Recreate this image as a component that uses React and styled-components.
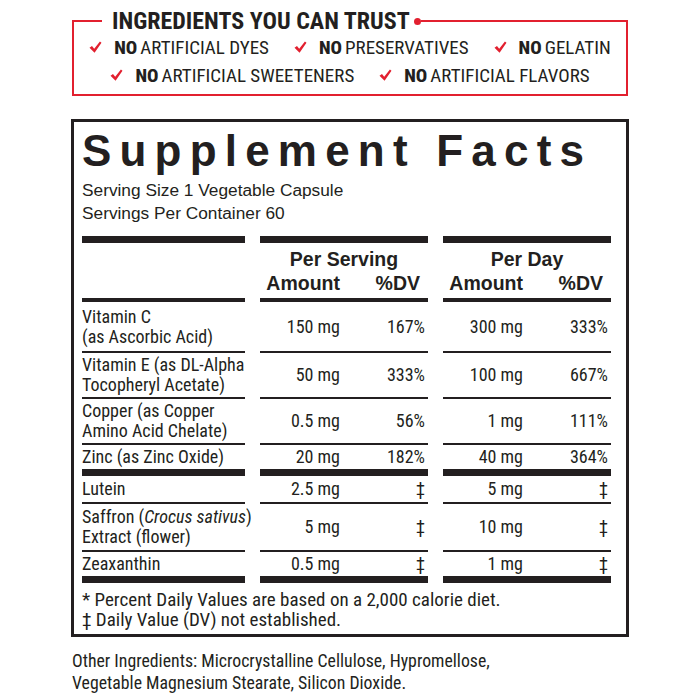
import React from 'react'
import styled, { createGlobalStyle } from 'styled-components'

const ink = '#231f20'
const red = '#e2202f'
const narrow = 'Roboto, "Liberation Sans", sans-serif'
const sans = '"Liberation Sans", Arial, sans-serif'

const GlobalStyle = createGlobalStyle`
  body {
    margin: 0;
    background: #fff;
    color: ${ink};
    font-family: ${sans};
  }
`

const Page = styled.main`
  width: 558px;
  margin: 0 auto;
  padding-top: 9px;
`

const TrustBox = styled.fieldset`
  box-sizing: border-box;
  width: 556px;
  margin: 0 auto;
  padding: 0 0 5px;
  border: 2px solid ${red};
`

const TrustTitle = styled.legend`
  margin-left: 28px;
  padding: 0 0 0 10px;
  font-family: ${narrow};
  font-stretch: 75%;
  font-weight: 700;
  font-size: 24px;
  line-height: 24px;
  display: flex;
  align-items: center;
`

const Dot = styled.span`
  width: 7px;
  height: 7px;
  border-radius: 50%;
  background: ${red};
  margin-left: 4px;
`

const ClaimRow = styled.div`
  display: flex;
  justify-content: center;
  gap: 25px;
  height: 28px;
  align-items: center;
`

const Claim = styled.div`
  display: flex;
  align-items: center;
  gap: 12px;
  font-family: ${narrow};
  font-stretch: 75%;
  font-size: 19px;
  b {
    font-weight: 800;
    margin-right: 3px;
  }
`

const Check = () => (
  <svg width="13" height="12" viewBox="0 0 14 13">
    <path d="M0.5 7.2 L3.2 5.3 L5.6 8.3 L11.8 0.5 L13.5 2 L6 12.6 Z" fill={red} />
  </svg>
)

const FactsBox = styled.section`
  box-sizing: border-box;
  width: 558px;
  margin-top: 23px;
  border: 3px solid ${ink};
  padding: 7px 15px 4px 8px;
`

const Title = styled.h1`
  margin: 0;
  font-family: ${sans};
  font-weight: 700;
  font-size: 44px;
  line-height: 44px;
  letter-spacing: 8.2px;
`

const Serving = styled.p`
  margin: 6px 0 0;
  font-family: ${sans};
  font-size: 17.3px;
  line-height: 23px;
`

const Table = styled.div`
  margin-top: 11px;
  font-family: ${narrow};
  font-stretch: 75%;
  font-size: 18px;
  line-height: 20px;
`

const Row = styled.div`
  display: grid;
  grid-template-columns: 163px 168px 168px;
  column-gap: 15px;
`

const Cell = styled.div`
  border-top: ${p => p.$top || 0}px solid ${ink};
  border-bottom: ${p => p.$rule}px solid ${ink};
  padding: ${p => p.$pad || '2px 0'};
  display: flex;
  flex-direction: column;
  justify-content: center;
  white-space: nowrap;
`

const Values = styled.div`
  display: grid;
  grid-template-columns: 80px 1fr;
  text-align: right;
  padding-right: 3px;
`

const GroupHead = styled.div`
  font-family: ${sans};
  font-weight: 700;
  font-size: 19.5px;
  line-height: 24px;
  text-align: center;
  ${Values} {
    padding-right: 8px;
  }
`

const Notes = styled.p`
  margin: 7px 0 0;
  font-family: ${narrow};
  font-stretch: 75%;
  font-size: 19px;
  line-height: 20px;
`

const Other = styled.p`
  margin: 13px 0 0 1px;
  font-family: ${narrow};
  font-stretch: 75%;
  font-size: 17.8px;
  line-height: 22px;
`

const nutrients = [
  { name: ['Vitamin C', '(as Ascorbic Acid)'], serv: ['150 mg', '167%'], day: ['300 mg', '333%'], rule: 2, pad: '5px 0 4px' },
  { name: ['Vitamin E (as DL-Alpha', 'Tocopheryl Acetate)'], serv: ['50 mg', '333%'], day: ['100 mg', '667%'], rule: 2 },
  { name: ['Copper (as Copper', 'Amino Acid Chelate)'], serv: ['0.5 mg', '56%'], day: ['1 mg', '111%'], rule: 2 },
  { name: ['Zinc (as Zinc Oxide)'], serv: ['20 mg', '182%'], day: ['40 mg', '364%'], rule: 7 },
  { name: ['Lutein'], serv: ['2.5 mg', '‡'], day: ['5 mg', '‡'], rule: 2, pad: '3px 0' },
  { name: [<>Saffron (<i>Crocus sativus</i>)</>, 'Extract (flower)'], serv: ['5 mg', '‡'], day: ['10 mg', '‡'], rule: 2, pad: '3px 0' },
  { name: ['Zeaxanthin'], serv: ['0.5 mg', '‡'], day: ['1 mg', '‡'], rule: 7 },
]

const claims = [
  ['ARTIFICIAL DYES', 'PRESERVATIVES', 'GELATIN'],
  ['ARTIFICIAL SWEETENERS', 'ARTIFICIAL FLAVORS'],
]

const App = () => (
  <Page>
    <GlobalStyle />
    <TrustBox>
      <TrustTitle>INGREDIENTS YOU CAN TRUST<Dot /></TrustTitle>
      {claims.map((row, i) => (
        <ClaimRow key={i}>
          {row.map(c => (
            <Claim key={c}>
              <Check />
              <span><b>NO</b>{c}</span>
            </Claim>
          ))}
        </ClaimRow>
      ))}
    </TrustBox>

    <FactsBox>
      <Title>Supplement Facts</Title>
      <Serving>
        Serving Size 1 Vegetable Capsule<br />
        Servings Per Container 60
      </Serving>
      <Table>
        <Row>
          <Cell $top={7} $rule={4} $pad="0" />
          {['Per Serving', 'Per Day'].map(h => (
            <Cell key={h} $top={7} $rule={4} $pad="4px 0 3px">
              <GroupHead>
                {h}
                <Values>
                  <span>Amount</span>
                  <span>%DV</span>
                </Values>
              </GroupHead>
            </Cell>
          ))}
        </Row>
        {nutrients.map((n, i) => (
          <Row key={i}>
            <Cell $rule={n.rule} $pad={n.pad}>
              {n.name.map((l, j) => <div key={j}>{l}</div>)}
            </Cell>
            {[n.serv, n.day].map((v, j) => (
              <Cell key={j} $rule={n.rule} $pad={n.pad}>
                <Values>
                  <span>{v[0]}</span>
                  <span>{v[1]}</span>
                </Values>
              </Cell>
            ))}
          </Row>
        ))}
      </Table>
      <Notes>
        * Percent Daily Values are based on a 2,000 calorie diet.<br />
        ‡ Daily Value (DV) not established.
      </Notes>
    </FactsBox>

    <Other>
      Other Ingredients: Microcrystalline Cellulose, Hypromellose,<br />
      Vegetable Magnesium Stearate, Silicon Dioxide.
    </Other>
  </Page>
)

export default App
